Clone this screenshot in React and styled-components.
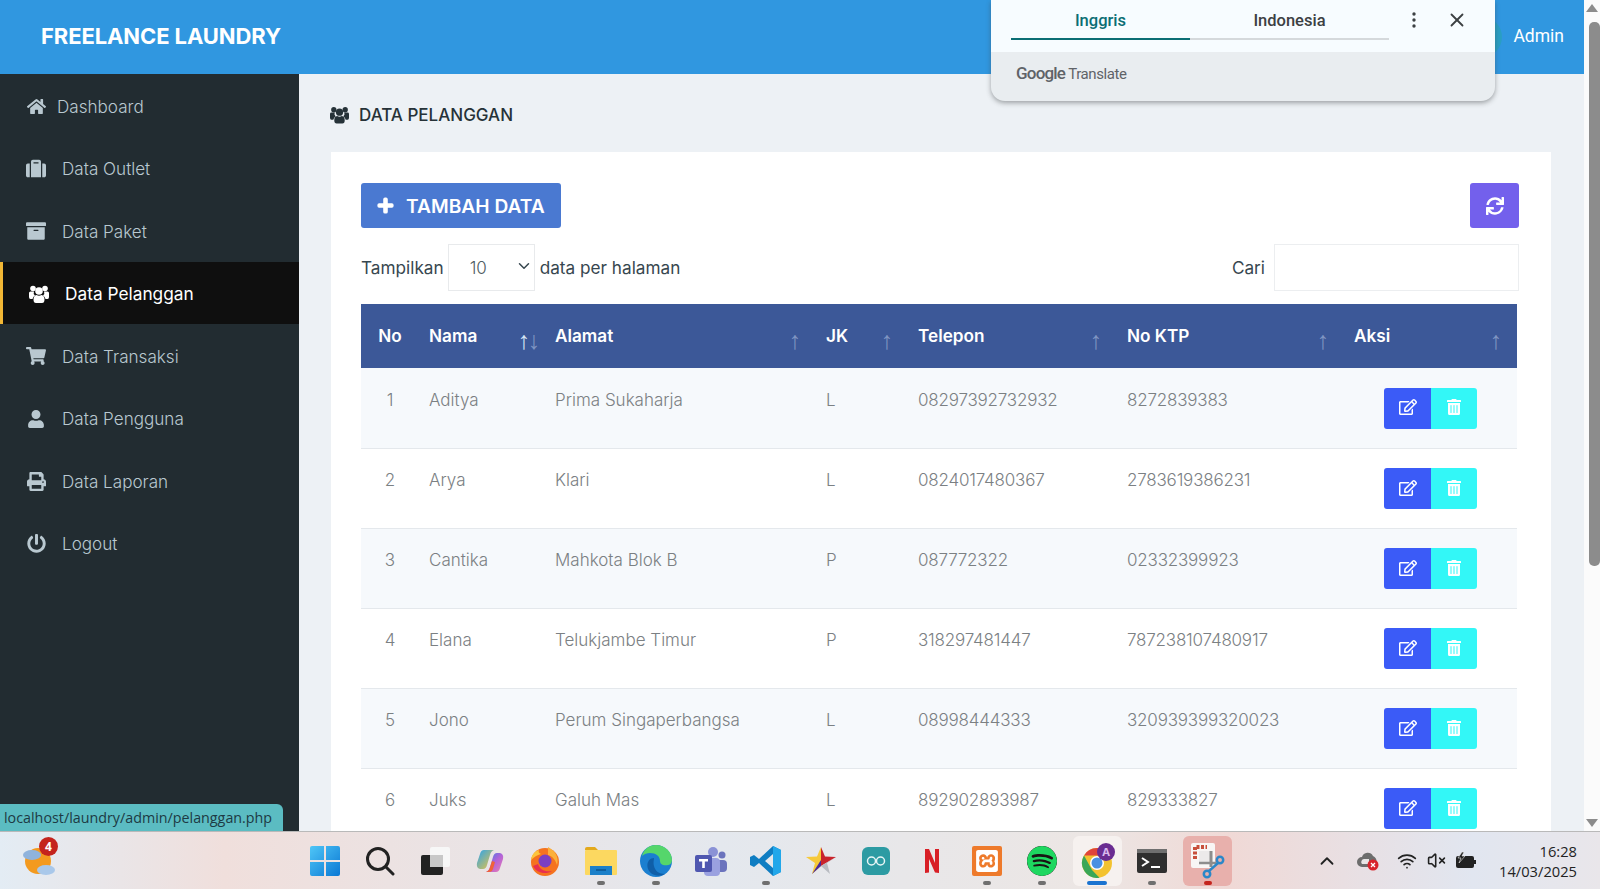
import styled, { createGlobalStyle } from "styled-components";
import {
  FaHome, FaSuitcase, FaArchive, FaShoppingCart, FaUser, FaPrint,
  FaPowerOff, FaPlus, FaSync, FaRegEdit, FaTrashAlt,
} from "react-icons/fa";
import { LuChevronDown, LuChevronUp, LuVolumeX, LuWifi, LuX } from "react-icons/lu";
import { SiSpotify, SiXampp } from "react-icons/si";

const Global = createGlobalStyle`
  html, body { margin: 0; height: 100%; overflow: hidden; }
  body { font-family: Inter, "Liberation Sans", sans-serif; }
  * { box-sizing: border-box; }
`;

function UsersIcon({ size }) {
  return (
    <svg width={size} height={size} viewBox="0 0 20 20" fill="currentColor">
      <circle cx="4" cy="5" r="2.800" />
      <circle cx="16" cy="5" r="2.800" />
      <path d="M0 9.500q0-1.500 1.500-1.500H5q-1 2 1 4-2 1-2.500 3.500H1.500Q0 15.500 0 13.500zM20 9.500q0-1.500-1.500-1.500H15q1 2-1 4 2 1 2.500 3.500h2q1.500 0 1.500-2z" />
      <circle cx="10" cy="7.500" r="3.800" />
      <path d="M4.500 16q0-4 3-4.500 2.500 1.500 5 0 3 .5 3 4.500 0 3.500-2.500 3.500H7q-2.500 0-2.500-3.500z" />
    </svg>
  );
}

const menu = [
  { label: "Dashboard", icon: <FaHome />, gap: 11, size: 19 },
  { label: "Data Outlet", icon: <FaSuitcase />, size: 21 },
  { label: "Data Paket", icon: <FaArchive />, size: 20 },
  { label: "Data Pelanggan", icon: <UsersIcon size={25} />, active: true },
  { label: "Data Transaksi", icon: <FaShoppingCart />, size: 20 },
  { label: "Data Pengguna", icon: <FaUser />, size: 18 },
  { label: "Data Laporan", icon: <FaPrint />, size: 19 },
  { label: "Logout", icon: <FaPowerOff />, size: 19 },
];

const columns = [
  { label: "No", width: 58, center: true },
  { label: "Nama", width: 126, sorted: true },
  { label: "Alamat", width: 271 },
  { label: "JK", width: 92 },
  { label: "Telepon", width: 209 },
  { label: "No KTP", width: 227 },
  { label: "Aksi", width: 173 },
];

const rows = [
  [1, "Aditya", "Prima Sukaharja", "L", "08297392732932", "8272839383"],
  [2, "Arya", "Klari", "L", "0824017480367", "2783619386231"],
  [3, "Cantika", "Mahkota Blok B", "P", "087772322", "02332399923"],
  [4, "Elana", "Telukjambe Timur", "P", "318297481447", "787238107480917"],
  [5, "Jono", "Perum Singaperbangsa", "L", "08998444333", "320939399320023"],
  [6, "Juks", "Galuh Mas", "L", "892902893987", "829333827"],
];

const Screen = styled.div`
  height: 100vh;
  display: grid;
  grid-template-rows: 1fr 58px;
  position: relative;
`;
const Browser = styled.div`
  display: flex;
  min-height: 0;
`;
const Page = styled.div`
  flex: 1;
  min-width: 0;
  display: flex;
  flex-direction: column;
`;
const Header = styled.header`
  height: 74px;
  flex: none;
  background: #3097e0;
  color: #fff;
  display: flex;
  align-items: center;
  padding: 0 20px 0 41px;
`;
const Brand = styled.div`
  font-size: 22px;
  font-weight: 700;
  letter-spacing: -0.1px;
  margin-top: -2px;
`;
const Avatar = styled.div`
  margin-left: auto;
  width: 40px;
  height: 40px;
  border-radius: 50%;
  background: #2a9fc4;
  margin-right: 11px;
`;
const AdminName = styled.div`
  font-family: Roboto, sans-serif;
  font-size: 17.5px;
  font-weight: 400;
  margin-top: -2px;
`;
const Body = styled.div`
  flex: 1;
  min-height: 0;
  display: flex;
`;
const Sidebar = styled.nav`
  width: 299px;
  flex: none;
  background: #222c31;
`;
const MenuItem = styled.div`
  height: 62.5px;
  padding-top: 2px;
  display: flex;
  align-items: center;
  gap: ${(p) => p.$gap || 16}px;
  padding-left: 26px;
  font-size: ${(p) => (p.$active ? 17.3 : 17.1)}px;
  font-weight: ${(p) => (p.$active ? 400 : 300)};
  color: ${(p) => (p.$active ? "#fff" : "#b9c8d0")};
  background: ${(p) => (p.$active ? "#0f0f0f" : "transparent")};
  border-left: ${(p) => (p.$active ? "3px solid #f2b735" : "0")};
`;
const MenuIcon = styled.span`
  width: 20px;
  display: flex;
  justify-content: center;
  font-size: ${(p) => p.$size || 20}px;
`;
const Main = styled.main`
  flex: 1;
  min-width: 0;
  overflow: hidden;
  background: #edf1f5;
  padding: 30px 33px 0 31px;
`;
const Title = styled.h1`
  margin: 0 0 26px;
  height: 22px;
  display: flex;
  align-items: center;
  gap: 10px;
  font-size: 17px;
  font-weight: 500;
  color: #263238;
  svg { margin-top: -2px; }
`;
const Card = styled.section`
  background: #fff;
  margin-left: 1px;
  padding: 31px 32px 40px 30px;
`;
const Toolbar = styled.div`
  display: flex;
  justify-content: space-between;
`;
const AddButton = styled.button`
  height: 45px;
  width: 200px;
  border: 0;
  border-radius: 3px;
  background: #4a79d1;
  color: #fff;
  font: 600 19.2px Inter, sans-serif;
  display: flex;
  align-items: center;
  gap: 12px;
  padding: 0 0 0 16px;
  svg { font-size: 17px; stroke: currentColor; stroke-width: 40; }
`;
const RefreshButton = styled.button`
  width: 49px;
  height: 45px;
  border: 0;
  border-radius: 3px;
  background: #7360ec;
  color: #fff;
  display: flex;
  align-items: center;
  justify-content: center;
  font-size: 18px;
`;
const Filters = styled.div`
  margin-top: 16px;
  height: 47px;
  display: flex;
  align-items: center;
  font-size: 17.2px;
  color: #37474f;
`;
const PageSizeBox = styled.div`
  position: relative;
  margin: 0 5px 0 4px;
  display: flex;
  svg { position: absolute; right: 2px; top: 13px; font-size: 18px; color: #37474f; pointer-events: none; }
`;
const PageSize = styled.select`
  appearance: none;
  width: 87px;
  height: 47px;
  padding-left: 21px;
  border: 1px solid #e8eaec;
  background: #fff;
  color: #4f5b62;
  font: 300 17px Inter, sans-serif;
`;
const SearchLabel = styled.label`
  margin-left: auto;
  display: flex;
  align-items: center;
  gap: 9px;
`;
const SearchInput = styled.input`
  width: 245px;
  height: 47px;
  border: 1px solid #eceef0;
`;
const Table = styled.table`
  margin-top: 13px;
  width: 1156px;
  table-layout: fixed;
  border-collapse: collapse;
`;
const HeadCell = styled.th`
  position: relative;
  width: ${(p) => p.$width}px;
  height: 64px;
  padding: 0 10px 2px;
  background: #3c5898;
  color: #fff;
  font-size: 17.2px;
  font-weight: 600;
  text-align: ${(p) => (p.$center ? "center" : "left")};
`;
const SortArrow = styled.span`
  position: absolute;
  top: 21px;
  right: ${(p) => p.$right}px;
  font: 400 25px/30px "Liberation Sans", sans-serif;
  color: ${(p) => (p.$bright ? "#d5e4f5" : "#7f94c2")};
`;
const Row = styled.tr`
  background: ${(p) => (p.$odd ? "#f6f9fc" : "#fff")};
  border-bottom: 1px solid #e4e8ec;
`;
const Cell = styled.td`
  height: 80px;
  padding: 19.5px 10px 0;
  vertical-align: top;
  font-size: 17px;
  line-height: 25px;
  font-weight: 300;
  color: #7b8083;
  letter-spacing: ${(p) => (p.$digits ? "-0.2px" : "0")};
  text-align: ${(p) => (p.$center ? "center" : "left")};
`;
const ActionGroup = styled.div`
  margin-left: 30px;
  width: 93px;
  height: 41px;
  display: flex;
  border-radius: 3px;
  overflow: hidden;
`;
const ActionButton = styled.button`
  flex: ${(p) => p.$grow};
  border: 0;
  padding: 0 0 2px;
  color: #fff;
  background: ${(p) => p.$color};
  font-size: ${(p) => p.$size}px;
  display: flex;
  align-items: center;
  justify-content: center;
`;
const ScrollTrack = styled.div`
  width: 16px;
  flex: none;
  background: #fbfbfb;
  display: flex;
  flex-direction: column;
  align-items: center;
  padding: 4px 0;
`;
const ScrollArrow = styled.div`
  width: 0;
  height: 0;
  border-left: 6px solid transparent;
  border-right: 6px solid transparent;
  ${(p) => (p.$down ? "border-top: 8px solid #8c8c8c; margin-top: auto;" : "border-bottom: 8px solid #8c8c8c;")}
`;
const ScrollThumb = styled.div`
  width: 11px;
  height: 544px;
  margin-top: 10px;
  margin-left: 5px;
  border-radius: 5px;
  background: #8c8c8c;
`;

/* overlays */
const TranslatePopup = styled.div`
  position: absolute;
  top: 0;
  left: 991px;
  width: 504px;
  height: 101px;
  background: #e9edf0;
  border-radius: 0 0 14px 14px;
  box-shadow: 0 2px 5px rgba(60, 64, 67, 0.45);
  overflow: hidden;
  font-family: Roboto, sans-serif;
`;
const PopupTop = styled.div`
  height: 52px;
  background: #f7fcff;
  display: flex;
  padding: 0 20px;
  color: #3c4043;
`;
const LangTab = styled.div`
  width: ${(p) => p.$width}px;
  height: 40px;
  line-height: 42px;
  text-align: center;
  font-size: 16.5px;
  font-weight: 500;
  color: ${(p) => (p.$active ? "#0b6e74" : "#3c4043")};
  border-bottom: 2px solid ${(p) => (p.$active ? "#0b6e74" : "#d5d9dc")};
`;
const Kebab = styled.svg`
  margin: 12px 0 0 23px;
`;
const CloseIcon = styled(LuX)`
  margin: 9px 0 0 30px;
  font-size: 22px;
  flex: none;
`;
const Powered = styled.div`
  padding: 11px 0 0 25px;
  color: #5f6368;
  font-size: 15px;
  letter-spacing: -0.4px;
  b { font-weight: 500; font-size: 17px; letter-spacing: -0.8px; }
`;
const StatusTip = styled.div`
  position: absolute;
  left: 0;
  bottom: 58px;
  width: 283px;
  height: 27px;
  padding-left: 4px;
  background: #5bbcc2;
  border-top-right-radius: 6px;
  color: #1d3a44;
  font: 14.3px/27px "Open Sans", sans-serif;
  white-space: nowrap;
`;

/* taskbar */
const Taskbar = styled.footer`
  display: flex;
  align-items: center;
  border-top: 1px solid #b9b9b9;
  background: linear-gradient(90deg, #e3ecf4 0%, #f0dfdc 14%, #e4e8ee 45%, #ece6e4 68%, #f0d9d6 77%, #e1e6f0 92%, #e9e6ea 100%);
`;
const WeatherBox = styled.div`
  position: relative;
  width: 297px;
  padding-left: 23px;
  flex: none;
  display: flex;
`;
const Badge = styled.span`
  position: absolute;
  left: 39px;
  top: -9px;
  width: 19px;
  height: 19px;
  border-radius: 50%;
  background: #c4241d;
  color: #fff;
  font: 700 12px/19px "Open Sans", sans-serif;
  text-align: center;
`;
const TaskApps = styled.div`
  display: flex;
  flex: none;
`;
const TaskApp = styled.div`
  position: relative;
  width: 55.2px;
  height: 50px;
  display: flex;
  align-items: center;
  justify-content: center;
`;
const TaskTile = styled.div`
  width: 49px;
  height: 50px;
  display: flex;
  align-items: center;
  justify-content: center;
  border-radius: 6px;
  background: ${(p) => p.$tile};
`;
const RunDot = styled.span`
  position: absolute;
  left: 50%;
  bottom: 1px;
  width: ${(p) => (p.$wide ? 20 : 8)}px;
  height: 4px;
  transform: translateX(-50%);
  border-radius: 2px;
  background: ${(p) => p.$color};
`;
const Tray = styled.div`
  margin-left: auto;
  display: flex;
  align-items: center;
  padding-right: 23px;
  color: #222;
`;
const TrayIcon = styled.span`
  display: flex;
  width: ${(p) => p.$width}px;
  justify-content: center;
`;
const Clock = styled.div`
  margin-left: 14px;
  text-align: right;
  font: 14.7px/20px "Open Sans", sans-serif;
  color: #222;
`;

function Weather() {
  return (
    <svg width="32" height="30" viewBox="0 0 32 30">
      <circle cx="15" cy="15" r="13" fill="#f39a1f" />
      <ellipse cx="9" cy="9" rx="9" ry="5" fill="#8fb3dc" />
      <ellipse cx="23" cy="24" rx="9" ry="5" fill="#a9c8ea" />
    </svg>
  );
}
function WindowsLogo() {
  return (
    <svg width="30" height="30" viewBox="0 0 30 30">
      <defs>
        <linearGradient id="win" x1="0" y1="0" x2="1" y2="1">
          <stop offset="0" stopColor="#4fc6f7" />
          <stop offset="1" stopColor="#0a78d4" />
        </linearGradient>
      </defs>
      <path fill="url(#win)" d="M0 2q0-2 2-2h12v14H0zM16 0h12q2 0 2 2v12H16zM0 16h14v14H2q-2 0-2-2zM16 16h14v12q0 2-2 2H16z" />
    </svg>
  );
}
function SearchGlyph() {
  return (
    <svg width="30" height="30" viewBox="0 0 30 30" fill="none" stroke="#222" strokeWidth="3">
      <circle cx="13" cy="13" r="10.500" />
      <path d="M21 21l7 7" strokeLinecap="round" />
    </svg>
  );
}
function TaskView() {
  return (
    <svg width="30" height="30" viewBox="0 0 30 30">
      <rect x="10" y="1" width="20" height="20" rx="2" fill="#f7f7f7" />
      <rect x="1" y="9" width="22" height="20" rx="2" fill="#222" />
      <rect x="10" y="9" width="13" height="12" fill="#c8c8c8" />
    </svg>
  );
}
function Copilot() {
  return (
    <svg width="28" height="28" viewBox="0 0 28 28">
      <defs>
        <linearGradient id="copA" x1="0" y1="0" x2="1" y2="1">
          <stop offset="0" stopColor="#2aa3ee" />
          <stop offset="1" stopColor="#f5c63a" />
        </linearGradient>
        <linearGradient id="copB" x1="0" y1="0" x2="1" y2="1">
          <stop offset="0" stopColor="#2f7fe8" />
          <stop offset="0.5" stopColor="#b263d8" />
          <stop offset="1" stopColor="#ef7fb0" />
        </linearGradient>
      </defs>
      <path fill="url(#copA)" d="M8 3h10q-3 1-4 5l-3 10q-1 4-4 4H4q-4-1-3-6l3-9q1-4 4-4z" />
      <path fill="url(#copB)" d="M20 25H10q3-1 4-5l3-10q1-4 4-4h3q4 1 3 6l-3 9q-1 4-4 4z" />
      <path fill="#f0623a" d="M10 25q3-1 4-5l2-6 3 1-2 7q-1 3-4 3z" />
    </svg>
  );
}
function Firefox() {
  return (
    <svg width="30" height="30" viewBox="0 0 30 30">
      <circle cx="15" cy="16" r="14" fill="#f5731f" />
      <path fill="#fbb03b" d="M18 1c8 4 11 11 9 18-2-6-5-9-9-10z" />
      <path fill="#fcc43d" d="M1 14C2 8 5 5 9 4c-1 2 0 3 2 4-4 1-7 3-10 6z" />
      <circle cx="15" cy="15" r="6.500" fill="#7a3fc2" />
      <path fill="#e8304f" d="M3 20c3 7 13 9 19 5-7 1-12-1-14-7z" />
    </svg>
  );
}
function Folder() {
  return (
    <svg width="32" height="30" viewBox="0 0 32 30">
      <path fill="#e3a91c" d="M0 3q0-2 2-2h8l3 3h-13z" />
      <rect y="4" width="32" height="25" rx="1" fill="#fcd860" />
      <rect x="5" y="20" width="22" height="9" fill="#1c80c9" />
      <rect x="11" y="23" width="10" height="2" fill="#0f5f9e" />
    </svg>
  );
}
function Edge() {
  return (
    <svg width="32" height="32" viewBox="0 0 32 32">
      <circle cx="16" cy="16" r="16" fill="#1b7fd0" />
      <path fill="#55d66b" d="M16 0c9 0 16 7 16 15 0 5-5 6-9 5-2-1-3-2-3-4 0-5-4-8-10-8-3 0-6 1-8 3 2-7 7-11 14-11z" />
      <path fill="#0f5ea8" d="M14 13c-5 0-8 5-6 11 2 5 9 9 17 5-6 0-10-3-11-8-1-3 0-6 0-8z" />
    </svg>
  );
}
function Teams() {
  return (
    <svg width="32" height="30" viewBox="0 0 32 30">
      <circle cx="18" cy="6" r="5" fill="#8a92d6" />
      <circle cx="27" cy="9" r="3.500" fill="#6b73bd" />
      <rect x="21" y="14" width="11" height="12" rx="4" fill="#6b73bd" />
      <rect x="9" y="12" width="16" height="18" rx="4" fill="#9aa1e0" />
      <rect y="9" width="17" height="17" rx="2" fill="#4f57b0" />
      <path fill="#fff" d="M4 13h9v2.500h-3.200V22H7.200v-6.500H4z" />
    </svg>
  );
}
function VsCode() {
  return (
    <svg width="32" height="32" viewBox="0 0 32 32">
      <path fill="#0f7dc2" d="M23 1l8 4v22l-8 4L9 18l-5 4-4-2v-8l4-2 5 4zM23 9l-8 7 8 7z" />
      <path fill="#22a7ea" d="M23 1l8 4v22l-8 4z" />
    </svg>
  );
}
function Star() {
  return (
    <svg width="30" height="30" viewBox="0 0 30 30">
      <path fill="#f6c93a" d="M15 1v19L6 28l3-11-9-6 11-.5z" />
      <path fill="#c9242c" d="M15 1l4 9.500 11 .5-15 9z" />
      <path fill="#b9bcc2" d="M30 11l-9 6 3 11-9-8z" />
      <path fill="#4b2a9c" d="M15 14v6l-9 8z" />
    </svg>
  );
}
function Arduino() {
  return (
    <svg width="28" height="28" viewBox="0 0 28 28">
      <rect width="28" height="28" rx="6" fill="#2d9ba3" />
      <g fill="none" stroke="#e8f6f6" strokeWidth="1.500">
        <circle cx="9.500" cy="14" r="4" />
        <circle cx="18.500" cy="14" r="4" />
      </g>
    </svg>
  );
}
function Netflix() {
  return (
    <svg width="14" height="24" viewBox="0 0 14 24">
      <path fill="#d81f26" d="M0 0h4l6 14V0h4v24l-4-.6L4 10v13.400L0 24z" />
    </svg>
  );
}
function Xampp() {
  return (
    <svg width="30" height="30" viewBox="0 0 30 30">
      <rect width="30" height="30" rx="2" fill="#ee7a2b" />
      <SiXampp x="4" y="4" size="22" color="#fff" />
    </svg>
  );
}
function Chrome() {
  return (
    <svg width="36" height="36" viewBox="-2 0 36 36">
      <circle cx="16" cy="20" r="15" fill="#f3c22f" />
      <path fill="#e0453a" d="M3 12.500A15 15 0 0 1 29 12.500H16z" />
      <path fill="#3aa757" d="M3 12.500L11 27l7.500 7.800A15 15 0 0 1 3 12.500z" />
      <circle cx="16" cy="20" r="7" fill="#fff" />
      <circle cx="16" cy="20" r="5.500" fill="#4a90e2" />
      <circle cx="25" cy="9" r="9" fill="#6a2c91" />
      <text x="25" y="13" textAnchor="middle" fontSize="11" fontWeight="700" fill="#d9b8ee" fontFamily="Inter, sans-serif">A</text>
    </svg>
  );
}
function Terminal() {
  return (
    <svg width="30" height="24" viewBox="0 0 30 24">
      <rect width="30" height="24" rx="2" fill="#2f2f2f" />
      <rect width="30" height="4" fill="#6f6f6f" />
      <path d="M5 9l6 4-6 4" fill="none" stroke="#fff" strokeWidth="2" />
      <rect x="14" y="17" width="9" height="2" fill="#fff" />
    </svg>
  );
}
function Snip() {
  return (
    <svg width="34" height="36" viewBox="0 0 34 36">
      <rect x="0" y="0" width="24" height="25" rx="2" fill="#f8f6f5" />
      <path d="M4 16V4h12" fill="none" stroke="#c8503c" strokeWidth="4" strokeDasharray="3 1.500" />
      <rect x="8" y="8" width="12" height="12" fill="#eceaea" />
      <path d="M20 8v16" stroke="#8d8d8d" strokeWidth="3" />
      <path d="M8 20h17" stroke="#8d8d8d" strokeWidth="2.500" />
      <g fill="none" stroke="#2b87c8" strokeWidth="2.500">
        <circle cx="16" cy="31" r="3.200" />
        <circle cx="29" cy="17" r="3.200" />
        <path d="M18 28l9-8" />
      </g>
    </svg>
  );
}
function CloudError() {
  return (
    <svg width="22" height="20" viewBox="0 0 22 20">
      <path fill="#6d6d6d" d="M5 16a5 5 0 0 1 0-10 6 6 0 0 1 11-1 6 6 0 0 1 0 11z" />
      <path fill="#e8e6e6" d="M5 13a3 3 0 0 1 2-5h5v5z" />
      <circle cx="16" cy="14" r="5.500" fill="#d8242c" />
      <path d="M14 12l4 4M18 12l-4 4" stroke="#fff" strokeWidth="1.300" />
    </svg>
  );
}
function Battery() {
  return (
    <svg width="22" height="18" viewBox="0 0 22 18">
      <rect x="1" y="4" width="18" height="12" rx="2" fill="#222" />
      <rect x="19" y="8" width="2" height="4" fill="#222" />
      <path d="M7 0L3 6h3l-2 5 6-7H7l2-4z" fill="#222" stroke="#eee" strokeWidth="0.600" />
    </svg>
  );
}

const apps = [
  { icon: <WindowsLogo /> },
  { icon: <SearchGlyph /> },
  { icon: <TaskView /> },
  { icon: <Copilot /> },
  { icon: <Firefox /> },
  { icon: <Folder />, dot: "#6f6f6f" },
  { icon: <Edge />, dot: "#6f6f6f" },
  { icon: <Teams /> },
  { icon: <VsCode />, dot: "#6f6f6f" },
  { icon: <Star /> },
  { icon: <Arduino /> },
  { icon: <Netflix /> },
  { icon: <Xampp />, dot: "#6f6f6f" },
  { icon: <SiSpotify size={30} color="#1ed760" style={{ background: "#191414", borderRadius: "50%" }} />, dot: "#6f6f6f" },
  { icon: <Chrome />, dot: "#1a73d0", wide: true, tile: "#f6f1ef" },
  { icon: <Terminal />, dot: "#6f6f6f" },
  { icon: <Snip />, dot: "#c4241d", tile: "#e8b0ac" },
];

export default function App() {
  return (
    <Screen>
      <Global />
      <Browser>
        <Page>
          <Header>
            <Brand>FREELANCE LAUNDRY</Brand>
            <Avatar />
            <AdminName>Admin</AdminName>
          </Header>
          <Body>
            <Sidebar>
              {menu.map(({ label, icon, gap, active, size }) => (
                <MenuItem key={label} $gap={gap} $active={active}>
                  <MenuIcon $size={size}>{icon}</MenuIcon>
                  {label}
                </MenuItem>
              ))}
            </Sidebar>
            <Main>
              <Title><UsersIcon size={19} /> DATA PELANGGAN</Title>
              <Card>
                <Toolbar>
                  <AddButton><FaPlus /> TAMBAH DATA</AddButton>
                  <RefreshButton aria-label="refresh"><FaSync /></RefreshButton>
                </Toolbar>
                <Filters>
                  Tampilkan
                  <PageSizeBox>
                    <PageSize defaultValue="10">
                      <option>10</option>
                      <option>25</option>
                      <option>50</option>
                    </PageSize>
                    <LuChevronDown />
                  </PageSizeBox>
                  data per halaman
                  <SearchLabel>Cari <SearchInput /></SearchLabel>
                </Filters>
                <Table>
                  <thead>
                    <tr>
                      {columns.map(({ label, width, center, sorted }, i) => (
                        <HeadCell key={label} $width={width} $center={center}>
                          {label}
                          {i > 0 && <SortArrow $right={15} $bright={sorted}>↑</SortArrow>}
                          {sorted && <SortArrow $right={5}>↓</SortArrow>}
                        </HeadCell>
                      ))}
                    </tr>
                  </thead>
                  <tbody>
                    {rows.map((row, r) => (
                      <Row key={row[0]} $odd={r % 2 === 0}>
                        {row.map((value, i) => (
                          <Cell key={i} $center={i === 0} $digits={i >= 4}>{value}</Cell>
                        ))}
                        <Cell>
                          <ActionGroup>
                            <ActionButton $grow={47} $color="#3b5bf7" $size={18} aria-label="edit"><FaRegEdit /></ActionButton>
                            <ActionButton $grow={46} $color="#33f7f7" $size={16} aria-label="delete"><FaTrashAlt /></ActionButton>
                          </ActionGroup>
                        </Cell>
                      </Row>
                    ))}
                  </tbody>
                </Table>
              </Card>
            </Main>
          </Body>
        </Page>
        <ScrollTrack>
          <ScrollArrow />
          <ScrollThumb />
          <ScrollArrow $down />
        </ScrollTrack>
      </Browser>
      <Taskbar>
        <WeatherBox>
          <Weather />
          <Badge>4</Badge>
        </WeatherBox>
        <TaskApps>
          {apps.map(({ icon, dot, wide, tile }, i) => (
            <TaskApp key={i}>
              {tile ? <TaskTile $tile={tile}>{icon}</TaskTile> : icon}
              {dot && <RunDot $color={dot} $wide={wide} />}
            </TaskApp>
          ))}
        </TaskApps>
        <Tray>
          <TrayIcon $width={40}><LuChevronUp size={22} /></TrayIcon>
          <TrayIcon $width={41}><CloudError /></TrayIcon>
          <TrayIcon $width={37}><LuWifi size={20} /></TrayIcon>
          <TrayIcon $width={22}><LuVolumeX size={19} /></TrayIcon>
          <TrayIcon $width={38}><Battery /></TrayIcon>
          <Clock>16:28<br />14/03/2025</Clock>
        </Tray>
      </Taskbar>
      <TranslatePopup>
        <PopupTop>
          <LangTab $width={179} $active>Inggris</LangTab>
          <LangTab $width={199}>Indonesia</LangTab>
          <Kebab width="4" height="16" viewBox="0 0 4 16" fill="#3c4043">
            <circle cx="2" cy="2" r="1.700" />
            <circle cx="2" cy="8" r="1.700" />
            <circle cx="2" cy="14" r="1.700" />
          </Kebab>
          <CloseIcon />
        </PopupTop>
        <Powered><b>Google</b> Translate</Powered>
      </TranslatePopup>
      <StatusTip>localhost/laundry/admin/pelanggan.php</StatusTip>
    </Screen>
  );
}
